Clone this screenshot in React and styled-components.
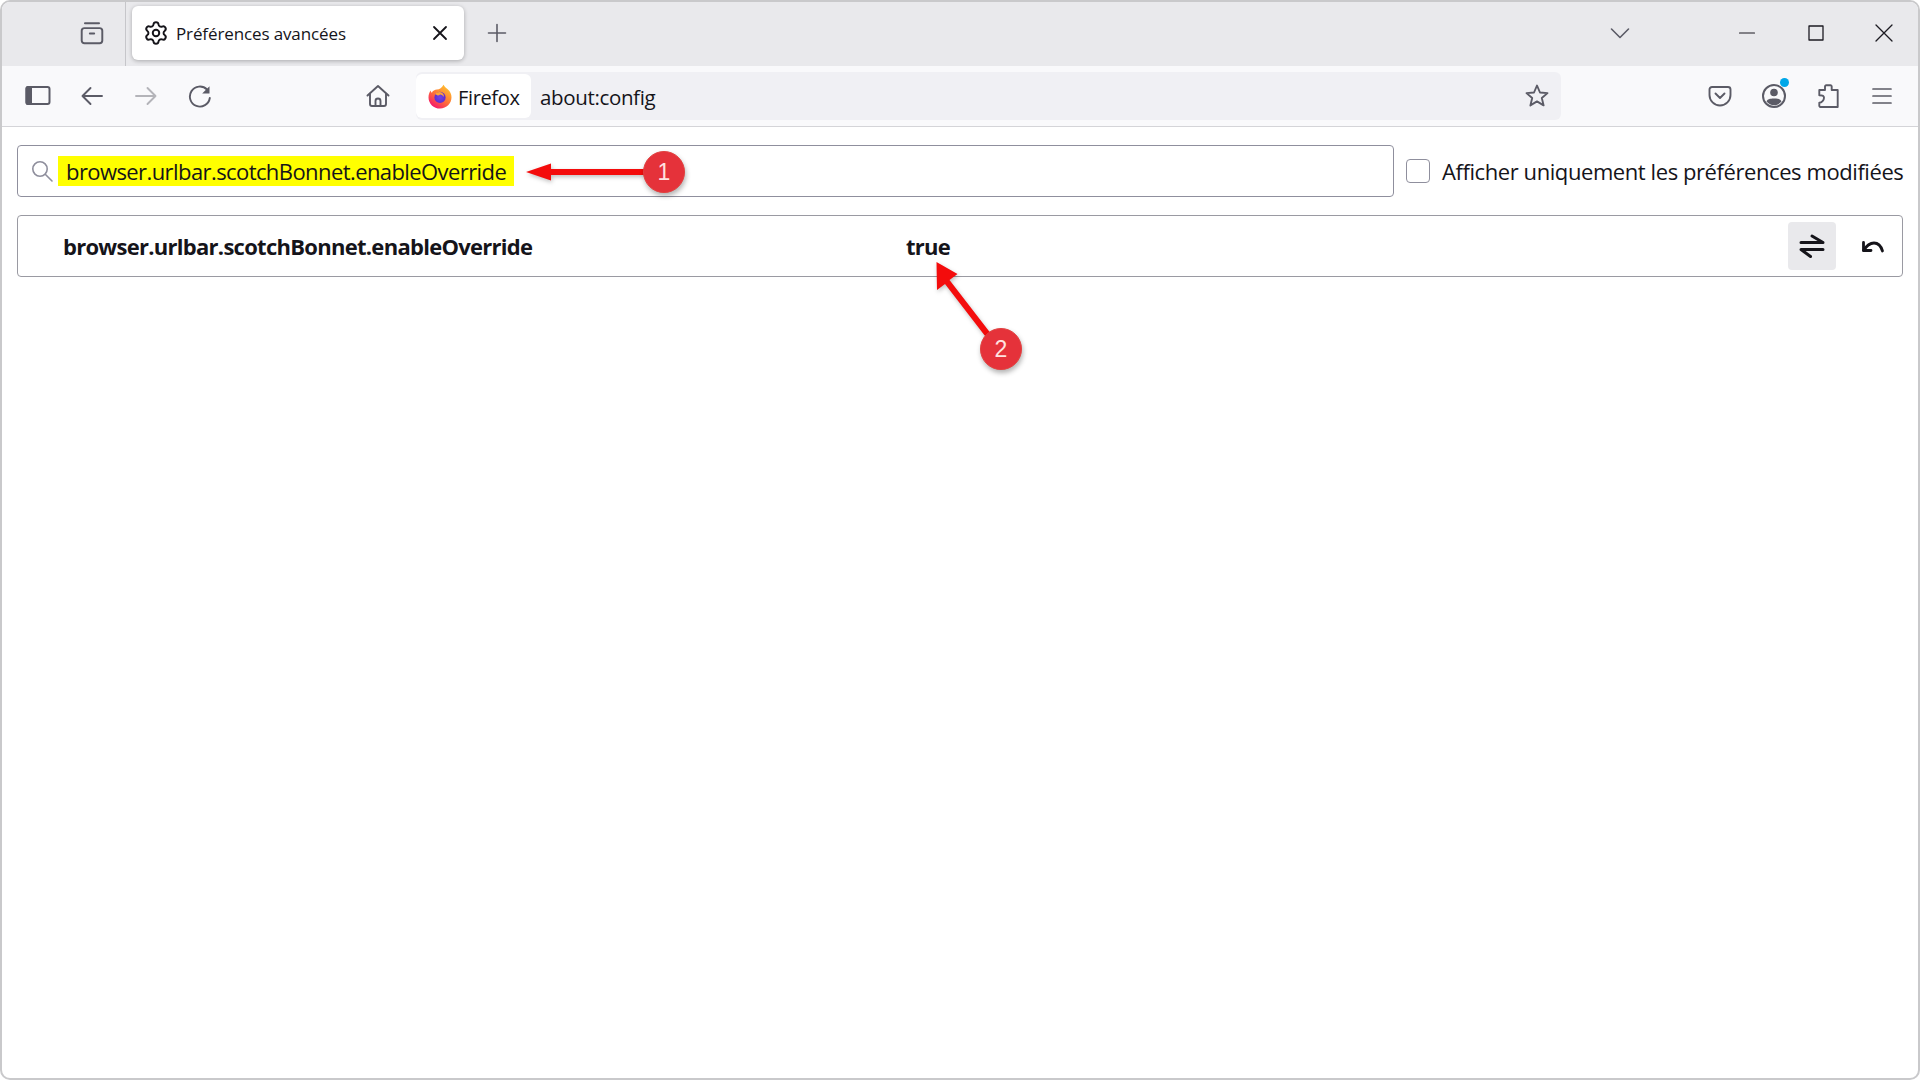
import React from "react";
import styled, { createGlobalStyle } from "styled-components";
import { Settings } from "lucide-react";

const GlobalStyle = createGlobalStyle`
  html, body {
    margin: 0;
    padding: 0;
    background: #fff;
  }
  body {
    font-family: "Open Sans", "Noto Sans", "Liberation Sans", sans-serif;
    color: #15141a;
  }
`;

// browser frame
const Frame = styled.div`
  position: relative;
  box-sizing: border-box;
  width: 1920px;
  height: 1080px;
  border: 2px solid #c9c9cb;
  border-radius: 10px;
  overflow: hidden;
  background: #fff;
`;

const TabStrip = styled.div`
  display: flex;
  align-items: center;
  height: 64px;
  padding-left: 66px;
  background: #e9e9ec;
`;

const StripButton = styled.div`
  display: flex;
  align-items: center;
  justify-content: center;
  flex: none;
  width: ${(p) => p.$w || 44}px;
  height: 44px;
  margin-left: ${(p) => p.$ml || 0}px;
  margin-top: -2px;
  color: #5b5b66;
`;

const Separator = styled.div`
  align-self: stretch;
  flex: none;
  width: 1px;
  margin-left: 9px;
  background: #c6c6ca;
`;

const Tab = styled.div`
  display: flex;
  align-items: center;
  flex: none;
  box-sizing: border-box;
  width: 332px;
  height: 54px;
  margin: -2px 0 0 6px;
  padding: 0 13px 0 11px;
  border-radius: 6px;
  background: #fff;
  box-shadow: 0 1px 4px rgba(0, 0, 0, 0.28);
`;

const TabTitle = styled.span`
  flex: 1;
  margin-left: 7px;
  padding-top: 1px;
  font-size: 17px;
  letter-spacing: -0.12px;
  white-space: nowrap;
`;

const Spacer = styled.div`
  flex: 1;
`;

const WindowButton = styled.div`
  display: flex;
  align-items: center;
  justify-content: center;
  flex: none;
  width: ${(p) => p.$w || 68}px;
  height: 44px;
  margin-top: -2px;
  margin-left: ${(p) => p.$ml || 0}px;
  color: #1c1b22;
`;

const Toolbar = styled.div`
  display: flex;
  align-items: center;
  box-sizing: border-box;
  height: 61px;
  padding-left: 14px;
  border-bottom: 1px solid #d4d4d8;
  background: #f9f9fb;
`;

const ToolButton = styled.div`
  position: relative;
  display: flex;
  align-items: center;
  justify-content: center;
  flex: none;
  width: 44px;
  height: 44px;
  margin-left: ${(p) => p.$ml ?? 10}px;
  color: ${(p) => (p.$off ? "#b4b4b9" : "#5b5b66")};
`;

const NotificationDot = styled.span`
  position: absolute;
  top: 4px;
  right: 7px;
  width: 9px;
  height: 9px;
  border-radius: 50%;
  background: #00a7e8;
`;

const UrlBar = styled.div`
  display: flex;
  align-items: center;
  flex: none;
  box-sizing: border-box;
  width: 1145px;
  height: 48px;
  margin-left: 16px;
  padding-right: 11px;
  border-radius: 6px;
  background: #f0f0f4;
`;

const Identity = styled.div`
  display: flex;
  align-items: center;
  flex: none;
  box-sizing: border-box;
  width: 115px;
  height: 44px;
  padding-left: 12px;
  border-radius: 6px;
  background: #fff;
  font-size: 20px;
  letter-spacing: -0.36px;
`;

const IdentityLabel = styled.span`
  margin-left: 6px;
  padding-top: 2px;
`;

const UrlText = styled.span`
  flex: 1;
  margin-left: 9px;
  padding-top: 2px;
  font-size: 20.5px;
  letter-spacing: -0.35px;
`;

const StarSlot = styled.div`
  display: flex;
  color: #5b5b66;
`;

// about:config page
const Content = styled.main`
  padding: 18px 15px 0 15px;
`;

const SearchRow = styled.div`
  display: flex;
  align-items: center;
`;

const SearchBox = styled.div`
  display: flex;
  align-items: center;
  flex: none;
  box-sizing: border-box;
  width: 1377px;
  height: 52px;
  padding-left: 12px;
  border: 1px solid #8f8f9d;
  border-radius: 4px;
  color: #8f8f9d;
`;

const Highlight = styled.span`
  margin-left: 4px;
  padding: 0 8px;
  height: 30px;
  line-height: 31px;
  background: #ffff00;
  color: #15141a;
  font-size: 22px;
  letter-spacing: -0.58px;
  white-space: nowrap;
`;

const CheckBox = styled.div`
  flex: none;
  box-sizing: border-box;
  width: 24px;
  height: 24px;
  margin-left: 12px;
  border: 1px solid #8f8f9d;
  border-radius: 4px;
`;

const CheckLabel = styled.label`
  margin-left: 12px;
  font-size: 22px;
  letter-spacing: -0.42px;
  white-space: nowrap;
`;

const PrefRow = styled.div`
  display: flex;
  align-items: center;
  box-sizing: border-box;
  height: 62px;
  margin-top: 18px;
  padding: 0 5px 0 45px;
  border: 1px solid #9a9aa2;
  border-radius: 4px;
  font-weight: 700;
  font-size: 22px;
  letter-spacing: -0.72px;
`;

const PrefName = styled.span`
  flex: none;
  width: 843px;
  white-space: nowrap;
`;

const PrefValue = styled.span`
  flex: 1;
`;

const RowButton = styled.div`
  display: flex;
  align-items: center;
  justify-content: center;
  flex: none;
  width: 48px;
  height: 48px;
  margin-left: ${(p) => p.$ml || 0}px;
  border-radius: 4px;
  background: ${(p) => (p.$active ? "#e9e9ec" : "transparent")};
  color: #15141a;
`;

// red annotations on top of the screenshot
const ArrowLayer = styled.svg`
  position: absolute;
  left: -2px;
  top: -2px;
  width: 1920px;
  height: 1080px;
  pointer-events: none;
  filter: drop-shadow(1px 2px 2px rgba(0, 0, 0, 0.25));
`;

const Bubble = styled.div`
  position: absolute;
  left: ${(p) => p.$x - 23}px;
  top: ${(p) => p.$y - 23}px;
  display: flex;
  align-items: center;
  justify-content: center;
  box-sizing: border-box;
  width: 42px;
  height: 42px;
  border: 1px solid #e2403f;
  border-radius: 50%;
  background: #e5323a;
  box-shadow: 1px 3px 5px rgba(0, 0, 0, 0.3);
  color: #ffe3e0;
  font-family: "Liberation Sans", sans-serif;
  font-size: 23px;
`;

const Glyph = ({ size = 24, box = 24, width = 1.8, children }) => (
  <svg width={size} height={size} viewBox={`0 0 ${box} ${box}`} fill="none" stroke="currentColor" strokeWidth={width} strokeLinecap="round" strokeLinejoin="round">
    {children}
  </svg>
);

const FirefoxLogo = () => (
  <svg width="24" height="25" viewBox="0 0 24 25">
    <defs>
      <linearGradient id="ffOuter" x1="0.8" y1="0.1" x2="0.2" y2="0.95">
        <stop offset="0" stopColor="#ffbd2e" />
        <stop offset="0.5" stopColor="#ff7139" />
        <stop offset="1" stopColor="#f5156c" />
      </linearGradient>
      <radialGradient id="ffInner" cx="0.5" cy="0.5" r="0.6">
        <stop offset="0" stopColor="#7542e5" />
        <stop offset="1" stopColor="#592acb" />
      </radialGradient>
    </defs>
    <path d="M15.5 0.8c0.9 2 2.6 3 4.2 4.5 2.6 2.4 3.8 5 3.8 8 0 6.3-5 11.2-11.4 11.2S0.5 19.6 0.5 13.4c0-2.7 0.7-5.300 2.200-7 0.100 1.100 0.500 1.800 1.200 2.300 0.800-1.900 2.900-3 5.100-3.100 2.600-0.100 4.900-1.800 6.500-4.800z" fill="url(#ffOuter)" />
    <circle cx="12" cy="13.4" r="5.600" fill="url(#ffInner)" />
    <path d="M7 10c1.800-2.200 5.300-2.700 7.300-1 1.300 1.100 1.800 2.500 1.400 3.900-0.700-1.500-2-2.300-3.700-2.400-0.500 0.800-1.400 1.100-2.300 1.100-0.900-0.700-1.800-1.200-2.700-1.600z" fill="#ffa436" />
  </svg>
);

const App = () => {
  return (
    <>
      <GlobalStyle />
      <Frame>
        <TabStrip>
          <StripButton $w={48}>
            <Glyph size={26} width={1.8}>
              <rect x="2.500" y="7.500" width="19" height="14" rx="2.500" />
              <path d="M5.500 3h13" />
              <path d="M10 12.500h4" />
            </Glyph>
          </StripButton>
          <Separator />
          <Tab>
            <Settings size={26} strokeWidth={1.8} color="#15141a" />
            <TabTitle>Préférences avancées</TabTitle>
            <Glyph size={22} box={22} width={1.8}>
              <path d="M5 5l12 12M17 5L5 17" />
            </Glyph>
          </Tab>
          <StripButton $ml={11}>
            <Glyph size={24} width={1.6}>
              <path d="M12 3.500v17M3.500 12h17" />
            </Glyph>
          </StripButton>
          <Spacer />
          <StripButton>
            <Glyph size={24} width={1.6}>
              <path d="M3.500 8l8.500 8.500L20.500 8" />
            </Glyph>
          </StripButton>
          <WindowButton $ml={70} $w={69}>
            <Glyph size={20} box={20} width={1.2}>
              <path d="M2.500 10h15" />
            </Glyph>
          </WindowButton>
          <WindowButton $w={69}>
            <Glyph size={20} box={20} width={1.3}>
              <rect x="3" y="3" width="14" height="14" />
            </Glyph>
          </WindowButton>
          <WindowButton>
            <Glyph size={20} box={20} width={1.3}>
              <path d="M2 2l16 16M18 2L2 18" />
            </Glyph>
          </WindowButton>
        </TabStrip>

        <Toolbar>
          <ToolButton $ml={0}>
            <Glyph size={26} box={26} width={2}>
              <rect x="1.500" y="4" width="23" height="17" rx="2" />
              <rect x="1.500" y="4" width="4.500" height="17" rx="1.500" fill="currentColor" />
            </Glyph>
          </ToolButton>
          <ToolButton>
            <Glyph size={24} width={1.9}>
              <path d="M22 12H2.500M10.500 4l-8 8 8 8" />
            </Glyph>
          </ToolButton>
          <ToolButton $off>
            <Glyph size={24} width={1.9}>
              <path d="M2 12h19.500M13.500 4l8 8-8 8" />
            </Glyph>
          </ToolButton>
          <ToolButton>
            <Glyph size={24} width={1.9}>
              <path d="M19 5.500A10 10 0 1 0 21.800 14" />
              <path d="M21.500 2.200v7.300h-7.300z" fill="currentColor" stroke="none" />
            </Glyph>
          </ToolButton>
          <ToolButton $ml={134}>
            <Glyph size={24} width={1.9}>
              <path d="M1.500 11.500L12 2l10.500 9.500" />
              <path d="M4 10v10a2 2 0 0 0 2 2h12a2 2 0 0 0 2-2V10" />
              <path d="M9.500 22v-5a2.500 2.500 0 0 1 5 0v5" />
            </Glyph>
          </ToolButton>
          <UrlBar>
            <Identity>
              <FirefoxLogo />
              <IdentityLabel>Firefox</IdentityLabel>
            </Identity>
            <UrlText>about:config</UrlText>
            <StarSlot>
              <Glyph size={26} box={26} width={1.9}>
                <path d="M13 2.500l3 7 7.500.6-5.700 4.900 1.800 7.400-6.600-4-6.600 4 1.800-7.400-5.700-4.900 7.500-.6z" />
              </Glyph>
            </StarSlot>
          </UrlBar>
          <ToolButton $ml={137}>
            <Glyph size={24} width={1.9}>
              <path d="M4 3h16a2.500 2.500 0 0 1 2.500 2.500V11a10.500 10.500 0 0 1-21 0V5.500A2.500 2.500 0 0 1 4 3z" />
              <path d="M7.500 9.500l4.500 4.500 4.500-4.500" />
            </Glyph>
          </ToolButton>
          <ToolButton>
            <Glyph size={26} box={26} width={2}>
              <circle cx="13" cy="13" r="11" />
              <circle cx="13" cy="9.500" r="3.800" fill="currentColor" stroke="none" />
              <path d="M5.500 18.500c1-2.300 3-3 7.500-3s6.500.7 7.500 3c-2 2.300-4.600 3.800-7.500 3.800s-5.500-1.500-7.500-3.800z" fill="currentColor" stroke="none" />
            </Glyph>
            <NotificationDot />
          </ToolButton>
          <ToolButton $ml={11}>
            <Glyph size={26} box={26} width={1.9}>
              <path d="M4 24h17.700V7h-6V3.500a1.200 1.200 0 0 0-1.200-1.200H10.200A1.200 1.200 0 0 0 9 3.500V7H3.300v5.300c2.500 0 4.700.6 4.700 2.400 0 2.300-2.200 5-4.700 5V23z" />
            </Glyph>
          </ToolButton>
          <ToolButton $ml={9}>
            <Glyph size={24} width={1.7}>
              <path d="M3 5h18M3 12h18M3 19h18" />
            </Glyph>
          </ToolButton>
        </Toolbar>

        <Content>
          <SearchRow>
            <SearchBox>
              <Glyph size={24} width={1.6}>
                <circle cx="10" cy="10" r="7.200" />
                <path d="M15.500 15.500L22 22" />
              </Glyph>
              <Highlight>browser.urlbar.scotchBonnet.enableOverride</Highlight>
            </SearchBox>
            <CheckBox />
            <CheckLabel>Afficher uniquement les préférences modifiées</CheckLabel>
          </SearchRow>
          <PrefRow>
            <PrefName>browser.urlbar.scotchBonnet.enableOverride</PrefName>
            <PrefValue>true</PrefValue>
            <RowButton $active>
              <Glyph size={26} box={26} width={3}>
                <path d="M2 9.500h22L13 3" />
                <path d="M24 16.500H2l9.500 7" />
              </Glyph>
            </RowButton>
            <RowButton $ml={13}>
              <Glyph size={24} width={2.800}>
                <path d="M2.500 8.500v8H10" />
                <path d="M2.500 16.500C6 11 9 9 13 9c4 0 7 3 8.500 8" />
              </Glyph>
            </RowButton>
          </PrefRow>
        </Content>

        <ArrowLayer viewBox="0 0 1920 1080">
          <path d="M526 172l25-8.500v5.500h93v6h-93v5.500z" fill="#f40c0c" />
          <path d="M936.500 262l21 12-8 6 52.500 68-5 3.500-52-67.500-8 6z" fill="#f40c0c" />
        </ArrowLayer>
        <Bubble $x={664} $y={172}>1</Bubble>
        <Bubble $x={1001} $y={349}>2</Bubble>
      </Frame>
    </>
  );
};

export default App;
